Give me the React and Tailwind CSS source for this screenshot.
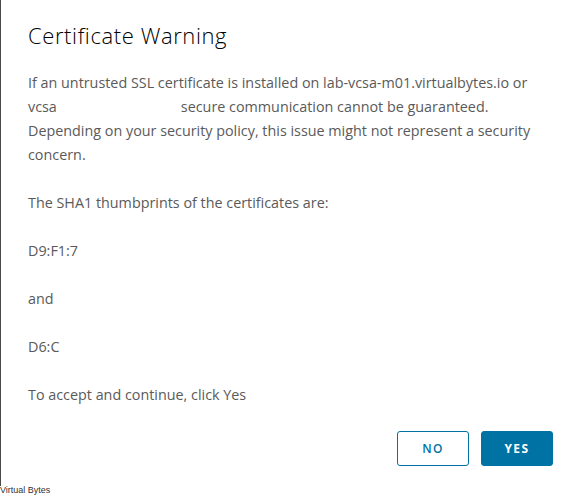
import React from "react";

export default function App() {
  const font = { fontFamily: "'Open Sans', Lato, sans-serif" };
  return (
    <div className="relative w-[579px] h-[495px] bg-white overflow-hidden" style={font}>
      <div className="absolute left-0 top-0 w-px h-[486px] bg-[#4a4a4a]" />
      <div className="pl-[28px] pr-[24px] pt-[20px]">
        <h1 className="text-[22px] leading-[30px] font-light text-[#000] tracking-[0.6px]">Certificate Warning</h1>
        <div className="mt-[21px] text-[14.35px] leading-[24px] text-[#5a5a5a]">
          <p className="whitespace-nowrap">
            If an untrusted SSL certificate is installed on lab-vcsa-m01.virtualbytes.io or
            <br />
            vcsa<span className="inline-block w-[124px]" />secure communication cannot be guaranteed.
            <br />
            Depending on your security policy, this issue might not represent a security
            <br />
            concern.
          </p>
          <p className="mt-[24px]">The SHA1 thumbprints of the certificates are:</p>
          <p className="mt-[24px]">D9:F1:7</p>
          <p className="mt-[24px]">and</p>
          <p className="mt-[24px]">D6:C</p>
          <p className="mt-[24px]">To accept and continue, click Yes</p>
        </div>
        <div className="mt-[24px] flex justify-end gap-[12px] pr-[2px]">
          <button className="w-[72px] h-[35px] rounded-[3px] border border-[#0072a3] bg-white text-[#0072a3] text-[12px] font-semibold tracking-[0.12em] uppercase">
            No
          </button>
          <button className="w-[72px] h-[35px] rounded-[3px] border border-[#0072a3] bg-[#0072a3] text-white text-[12px] font-bold tracking-[0.12em] uppercase">
            Yes
          </button>
        </div>
      </div>
      <div className="absolute left-0 top-[486px] text-[9px] leading-[9px] text-[#333]" style={{ fontFamily: "'Liberation Sans', Arial, sans-serif" }}>
        Virtual Bytes
      </div>
    </div>
  );
}
